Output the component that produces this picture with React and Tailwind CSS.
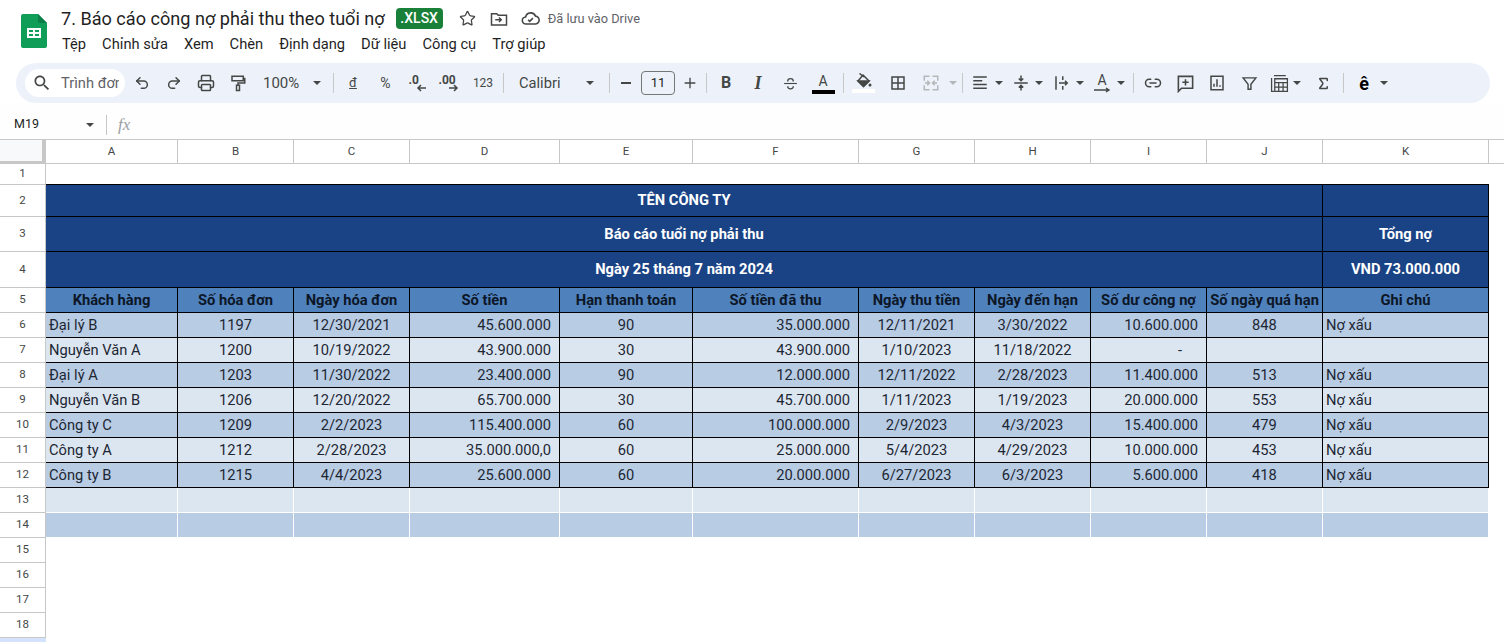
import { Undo2, Redo2, Printer, Star, Link2, Sigma } from 'lucide-react'

const font = "font-['Roboto',sans-serif]"

const columns = 'grid-cols-[46px_132px_116px_116px_150px_133px_166px_116px_116px_116px_116px_166px_16px]'

const headers = ['Khách hàng', 'Số hóa đơn', 'Ngày hóa đơn', 'Số tiền', 'Hạn thanh toán', 'Số tiền đã thu', 'Ngày thu tiền', 'Ngày đến hạn', 'Số dư công nợ', 'Số ngày quá hạn', 'Ghi chú']

const rows = [
  ['Đại lý B', '1197', '12/30/2021', '45.600.000', '90', '35.000.000', '12/11/2021', '3/30/2022', '10.600.000', '848', 'Nợ xấu'],
  ['Nguyễn Văn A', '1200', '10/19/2022', '43.900.000', '30', '43.900.000', '1/10/2023', '11/18/2022', '-', '', ''],
  ['Đại lý A', '1203', '11/30/2022', '23.400.000', '90', '12.000.000', '12/11/2022', '2/28/2023', '11.400.000', '513', 'Nợ xấu'],
  ['Nguyễn Văn B', '1206', '12/20/2022', '65.700.000', '30', '45.700.000', '1/11/2023', '1/19/2023', '20.000.000', '553', 'Nợ xấu'],
  ['Công ty C', '1209', '2/2/2023', '115.400.000', '60', '100.000.000', '2/9/2023', '4/3/2023', '15.400.000', '479', 'Nợ xấu'],
  ['Công ty A', '1212', '2/28/2023', '35.000.000,0', '60', '25.000.000', '5/4/2023', '4/29/2023', '10.000.000', '453', 'Nợ xấu'],
  ['Công ty B', '1215', '4/4/2023', '25.600.000', '60', '20.000.000', '6/27/2023', '6/3/2023', '5.600.000', '418', 'Nợ xấu'],
]

const align = ['justify-start pl-[3px]', 'justify-center', 'justify-center', 'justify-end pr-[8px]', 'justify-center', 'justify-end pr-[8px]', 'justify-center', 'justify-center', 'justify-end pr-[8px]', 'justify-center', 'justify-start pl-[3px]']

function Svg({ children, size = 18 }) {
  return (
    <svg width={size} height={size} viewBox="0 0 24 24" fill="none" stroke="#444746" strokeWidth="2">
      {children}
    </svg>
  )
}

function Caret({ className = '', light }) {
  return (
    <div className={`flex items-center justify-center ${className}`}>
      <div className={`w-0 h-0 border-l-[4px] border-r-[4px] border-t-[4px] border-l-transparent border-r-transparent ${light ? 'border-t-[#b4b7ba]' : 'border-t-[#444746]'}`}></div>
    </div>
  )
}

function Btn({ children, className = 'w-[32px]' }) {
  return <div className={`flex items-center justify-center shrink-0 ${className}`}>{children}</div>
}

function Sep({ className = '' }) {
  return <div className={`w-px h-[20px] bg-[#c7c7c7] shrink-0 ${className}`}></div>
}

function Toolbar() {
  return (
    <div className="mx-[16px] h-[40px] w-[1474px] rounded-full bg-[#edf2fa] flex items-center pl-[9px] text-[#444746]">
      <div className="w-[100px] h-[28px] rounded-full bg-white flex items-center shrink-0 mr-px">
        <svg className="ml-[7px]" width="20" height="20" viewBox="0 0 24 24" fill="#444746">
          <path d="M15.5 14h-.79l-.28-.27C15.41 12.59 16 11.11 16 9.5 16 5.91 13.09 3 9.5 3S3 5.91 3 9.5 5.91 16 9.5 16c1.61 0 3.09-.59 4.23-1.57l.27.28v.79l5 4.99L20.49 19l-4.99-5zm-6 0C7.01 14 5 11.99 5 9.5S7.01 5 9.5 5 14 7.01 14 9.5 11.99 14 9.500 14z" />
        </svg>
        <span className="ml-[9px] text-[14.7px] text-[#5f6368] whitespace-nowrap overflow-hidden w-[58px]">Trình đơn</span>
      </div>
      <Btn><Undo2 size={16} color="#444746" strokeWidth={2.2} /></Btn>
      <Btn><Redo2 size={16} color="#444746" strokeWidth={2.2} /></Btn>
      <Btn><Printer size={18} color="#444746" /></Btn>
      <Btn>
        <Svg>
          <path d="M4 3h15v6H4z" />
          <path d="M19 6h2v6h-9v3" />
          <path d="M10 15h4v7h-4z" />
        </Svg>
      </Btn>
      <div className="w-[72px] flex items-center shrink-0">
        <span className="ml-[9px] w-[50px] text-[15px]">100%</span>
        <Caret className="w-[8px]" />
      </div>
      <Sep className="ml-[7px] mr-[3px]" />
      <Btn><span className="text-[13px] underline">đ</span></Btn>
      <Btn className="w-[33px]"><span className="text-[14px]">%</span></Btn>
      <Btn className="w-[31px]">
        <div className="relative w-[20px] h-[18px] font-bold text-[12px] leading-none">
          <span className="absolute left-[1px] top-0">.0</span>
          <svg className="absolute left-[8px] top-[10px]" width="10" height="8" viewBox="0 0 10 8" fill="none" stroke="#444746" strokeWidth="1.5"><path d="M10 4H2M5 1 2 4l3 3" /></svg>
        </div>
      </Btn>
      <Btn className="w-[33px]">
        <div className="relative w-[22px] h-[18px] font-bold text-[12px] leading-none">
          <span className="absolute left-0 top-0">.00</span>
          <svg className="absolute left-[10px] top-[10px]" width="10" height="8" viewBox="0 0 10 8" fill="none" stroke="#444746" strokeWidth="1.5"><path d="M0 4h8M5 1l3 3-3 3" /></svg>
        </div>
      </Btn>
      <Btn className="w-[34px]"><span className="text-[12px]">123</span></Btn>
      <Sep className="ml-[3px]" />
      <div className="w-[98px] flex items-center shrink-0">
        <span className="ml-[15px] w-[67px] text-[14.7px]">Calibri</span>
        <Caret className="w-[8px]" />
      </div>
      <Sep className="ml-[7px]" />
      <Btn className="w-[31px]"><div className="w-[10px] h-[2px] bg-[#444746]"></div></Btn>
      <div className="w-[34px] h-[24px] border border-[#747775] rounded-[4px] flex items-center justify-center text-[13px] text-[#1f1f1f] shrink-0">11</div>
      <Btn className="w-[30px]">
        <Svg size={16}><path d="M12 4v16M4 12h16" /></Svg>
      </Btn>
      <Sep className="mx-px mr-[3px]" />
      <Btn><span className="text-[16px] font-bold">B</span></Btn>
      <Btn><span className="text-[18px] italic font-bold font-['Liberation_Serif',serif]">I</span></Btn>
      <Btn>
        <Svg size={17}>
          <path d="M3 12h18" strokeWidth="1.6" />
          <path d="M8 9c0-3 2-4 4-4s4 1 4 4M8 16c0 2 2 3.5 4 3.5s4-1.5 4-3.5" strokeWidth="1.8" />
        </Svg>
      </Btn>
      <div className="w-[32px] ml-px flex flex-col items-center shrink-0">
        <span className="text-[14px] leading-[14px] mt-[2px]">A</span>
        <div className="w-[23px] h-[4px] bg-black mt-[2px]"></div>
      </div>
      <Sep className="ml-[4px] mr-[3px]" />
      <div className="w-[32px] flex flex-col items-center shrink-0">
        <svg width="17" height="15" viewBox="0 0 17 15" fill="none" stroke="#444746" strokeWidth="1.500">
          <path d="M4.500 0.500 9 4" />
          <path d="M8 2 14 8 8.500 13.500 3 8z" />
          <path d="M3 8h11l-5.500 5.500z" fill="#444746" />
          <circle cx="15" cy="12" r="1.500" fill="#444746" stroke="none" />
        </svg>
        <div className="w-[23px] h-[4px] bg-white mt-[1px]"></div>
      </div>
      <Btn className="w-[32px] ml-[3px]">
        <Svg size={18}>
          <path d="M4 4h16v16H4zM12 4v16M4 12h16" />
        </Svg>
      </Btn>
      <Btn className="w-[32px] ml-px">
        <svg width="18" height="18" viewBox="0 0 24 24" fill="none" stroke="#b4b7ba" strokeWidth="2">
          <path d="M3 9V3h7M21 9V3h-7M3 15v6h7M21 15v6h-7M4 12h6M7 9l3 3-3 3M20 12h-6M17 9l-3 3 3 3" />
        </svg>
      </Btn>
      <Caret light className="w-[11px]" />
      <Sep className="ml-[4px]" />
      <Btn className="w-[28px] ml-[3px]">
        <Svg size={18}><path d="M3 4h18M3 9h12M3 14h18M3 19h18" /></Svg>
      </Btn>
      <Caret className="w-[9px]" />
      <Btn className="w-[28px] ml-[4px]">
        <Svg size={18}><path d="M3 12h18M12 2v7M9 6l3 3 3-3M12 22v-7M9 18l3-3 3 3" /></Svg>
      </Btn>
      <Caret className="w-[8px]" />
      <Btn className="w-[28px] ml-[5px]">
        <Svg size={18}><path d="M4 3v18M13 3v5M13 16v5M8 12h11M16 9l3 3-3 3" /></Svg>
      </Btn>
      <Caret className="w-[8px]" />
      <Btn className="w-[28px] ml-[4px]">
        <div className="flex flex-col items-center">
          <span className="text-[14px] leading-[13px]">A</span>
          <svg width="18" height="6" viewBox="0 0 18 6" fill="none" stroke="#444746" strokeWidth="1.4"><path d="M1 3h15M13 1l3 2-3 2" /></svg>
        </div>
      </Btn>
      <Caret className="w-[10px]" />
      <Sep className="ml-[7px] mr-[3px]" />
      <Btn><Link2 size={18} color="#444746" /></Btn>
      <Btn>
        <Svg size={19}><path d="M3 3h18v15H7l-4 4zM12 6.5v8M8 10.5h8" /></Svg>
      </Btn>
      <Btn>
        <Svg size={18}><path d="M4 3h16v18H4zM8 17v-4M12 17V7M16 17v-2" /></Svg>
      </Btn>
      <Btn>
        <Svg size={17}><path d="M3 4h18l-7 9v7h-4v-7z" /></Svg>
      </Btn>
      <Btn className="w-[28px]">
        <Svg size={19}>
          <path d="M5 2h15M2 5v17h3" strokeWidth="1.6" />
          <path d="M6 6h16v16H6zM6 11h16M6 16.500h16M11 11v11M16.500 11v11" strokeWidth="1.6" />
        </Svg>
      </Btn>
      <Caret className="w-[8px]" />
      <Btn className="w-[32px] ml-[6px]"><Sigma size={15} color="#444746" strokeWidth={2.4} /></Btn>
      <Sep className="ml-[4px] mr-[6px]" />
      <Btn className="w-[28px]"><span className="text-[18px] font-bold text-black">ê</span></Btn>
      <Caret className="w-[12px]" />
    </div>
  )
}

function Sheet() {
  const rowHead = 'flex items-center justify-center bg-white border-r border-b border-[#c7c7c7] text-[11.5px] text-[#444746]'
  const cell = 'flex items-center whitespace-nowrap border-r border-b'
  return (
    <div className={`grid ${columns} grid-rows-[24px_21px_32px_35px_36px_25px_25px_25px_25px_25px_25px_25px_25px_25px_25px_25px_25px_25px_25px_10px] border-t border-[#c7c7c7] text-[14.7px] text-[#1d2733]`}>
      <div className="bg-[#f8f9fa] border-r-4 border-b-[3px] border-[#c7c7c7]"></div>
      {['A', 'B', 'C', 'D', 'E', 'F', 'G', 'H', 'I', 'J', 'K'].map((c) => (
        <div key={c} className="flex items-center justify-center bg-white border-r border-b border-[#c7c7c7] text-[11.5px] text-[#444746]">{c}</div>
      ))}
      <div className="border-b border-[#c7c7c7]"></div>

      <div className={rowHead}>1</div>
      <div className="col-span-11 border-b border-black"></div>
      <div></div>

      <div className={rowHead}>2</div>
      <div className={`col-span-10 justify-center bg-[#1a4386] border-black text-white font-bold ${cell}`}>TÊN CÔNG TY</div>
      <div className={`bg-[#1a4386] border-black ${cell}`}></div>
      <div></div>

      <div className={rowHead}>3</div>
      <div className={`col-span-10 justify-center bg-[#1a4386] border-black text-white font-bold ${cell}`}>Báo cáo tuổi nợ phải thu</div>
      <div className={`justify-center bg-[#1a4386] border-black text-white font-bold ${cell}`}>Tổng nợ</div>
      <div></div>

      <div className={rowHead}>4</div>
      <div className={`col-span-10 justify-center bg-[#1a4386] border-black text-white font-bold ${cell}`}>Ngày 25 tháng 7 năm 2024</div>
      <div className={`justify-center bg-[#1a4386] border-black text-white font-bold ${cell}`}>VND 73.000.000</div>
      <div></div>

      <div className={rowHead}>5</div>
      {headers.map((h) => (
        <div key={h} className={`justify-center bg-[#4f81bd] border-black text-[#0c1626] font-bold ${cell}`}>{h}</div>
      ))}
      <div></div>

      {rows.flatMap((row, i) => [
        <div key={`h${i}`} className={rowHead}>{i + 6}</div>,
        ...row.map((v, j) => (
          <div key={`${i}-${j}`} className={`${i % 2 ? 'bg-[#dce6f1]' : 'bg-[#b8cce4]'} border-black ${cell} ${v === '-' ? 'justify-end pr-[24px]' : align[j]}`}>{v}</div>
        )),
        <div key={`e${i}`}></div>,
      ])}

      <div className={rowHead}>13</div>
      {headers.map((h) => (
        <div key={h} className="bg-[#dce6f1] border-r border-b border-white"></div>
      ))}
      <div></div>

      <div className={rowHead}>14</div>
      {headers.map((h) => (
        <div key={h} className="bg-[#b8cce4] border-r border-b border-white"></div>
      ))}
      <div></div>

      {[15, 16, 17, 18].map((n) => [
        <div key={n} className={rowHead}>{n}</div>,
        <div key={`b${n}`} className="col-span-12"></div>,
      ])}
      <div className="bg-[#d3e3fd]"></div>
    </div>
  )
}

export default function App() {
  return (
    <div className={`w-[1504px] h-[642px] overflow-hidden bg-white ${font}`}>
      <div className="h-[63px] flex bg-white">
        <svg className="ml-[21px] mt-[14px] shrink-0" width="26" height="34" viewBox="0 0 26 34">
          <path d="M2 0h15l9 9v23a2 2 0 0 1-2 2H2a2 2 0 0 1-2-2V2a2 2 0 0 1 2-2z" fill="#0f9d58" />
          <path d="M17 0l9 9h-7a2 2 0 0 1-2-2z" fill="#0b7f47" />
          <path d="M6 14h14v10H6zM8 16v2h4v-2zM14 16v2h4v-2zM8 20v2h4v-2zM14 20v2h4v-2z" fill="#fff" fillRule="evenodd" />
        </svg>
        <div className="ml-[14px]">
          <div className="flex items-center h-[37px]">
            <span className="text-[18.1px] text-[#1f1f1f] whitespace-nowrap">7. Báo cáo công nợ phải thu theo tuổi nợ</span>
            <span className="ml-[11px] w-[47px] h-[21px] rounded-[4px] bg-[#188038] text-white text-[14px] font-medium flex items-center justify-center">.XLSX</span>
            <Star className="ml-[16px]" size={17} color="#444746" strokeWidth={1.8} />
            <svg className="ml-[14px]" width="18" height="18" viewBox="0 0 24 24" fill="none" stroke="#444746" strokeWidth="2">
              <path d="M2 5h7l2 2h11v13H2zM7 13h8M12 10l3 3-3 3" />
            </svg>
            <svg className="ml-[13px]" width="19" height="19" viewBox="0 0 24 24" fill="none" stroke="#444746" strokeWidth="2">
              <path d="M6.500 19a4.500 4.500 0 0 1-.6-9 6.500 6.500 0 0 1 12.400-1 5 5 0 0 1-.8 10zM9 13.500l2 2 4-4" />
            </svg>
            <span className="ml-[8px] text-[12.800px] text-[#5f6368] whitespace-nowrap">Đã lưu vào Drive</span>
          </div>
          <div className="flex gap-4 text-[14.700px] text-[#1f1f1f] leading-[16px] mt-[-1px] ml-px">
            <span>Tệp</span>
            <span>Chỉnh sửa</span>
            <span>Xem</span>
            <span>Chèn</span>
            <span>Định dạng</span>
            <span>Dữ liệu</span>
            <span>Công cụ</span>
            <span>Trợ giúp</span>
          </div>
        </div>
      </div>
      <Toolbar />
      <div className="h-[36px] flex items-center pt-[7px] bg-[#fefefe]">
        <span className="ml-[14px] w-[70px] text-[12.500px] text-[#1f1f1f]">M19</span>
        <Caret className="w-[12px]" />
        <Sep className="ml-[10px]" />
        <span className="ml-[11px] text-[17px] italic text-[#9aa0a6] font-['Liberation_Serif',serif]">fx</span>
      </div>
      <Sheet />
    </div>
  )
}
